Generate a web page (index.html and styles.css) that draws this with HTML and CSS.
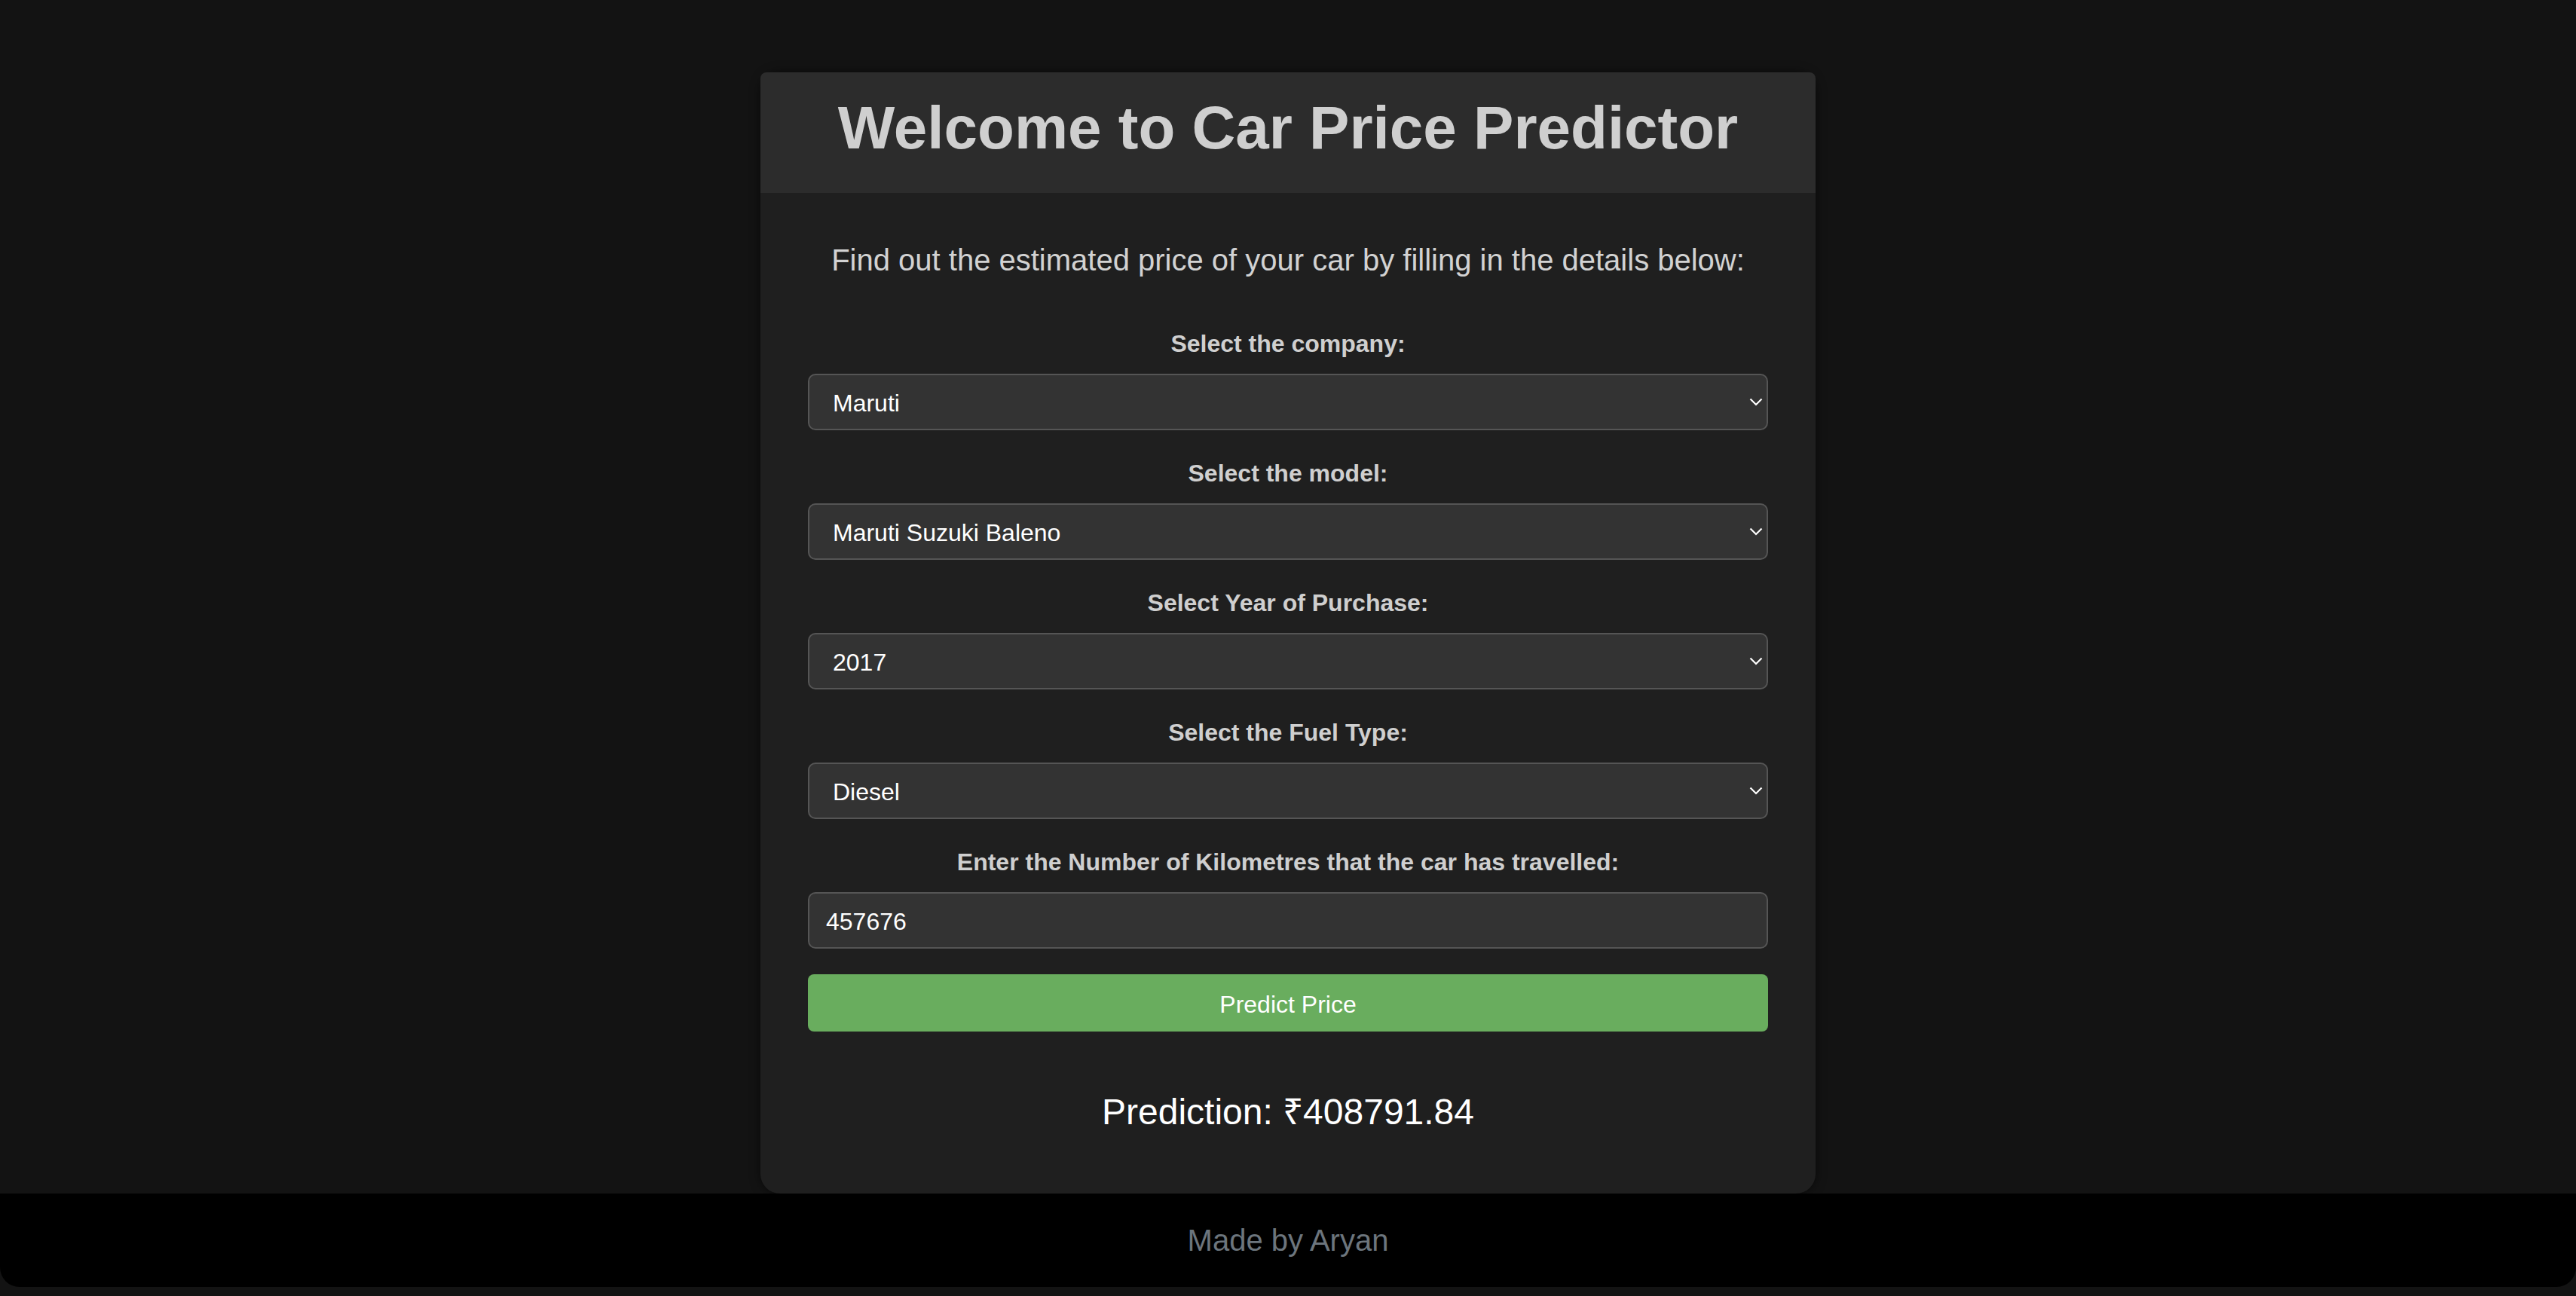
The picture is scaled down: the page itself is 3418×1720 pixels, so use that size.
FILE: index.html
```html
<!DOCTYPE html>
<html lang="en">
<head>
<meta charset="utf-8">
<title>Car Price Predictor</title>
<link rel="stylesheet" href="styles.css">
</head>
<body>
<div class="page">
  <main class="card">
    <header class="card-header">
      <h1>Welcome to Car Price Predictor</h1>
    </header>
    <div class="card-body">
      <p class="intro">Find out the estimated price of your car by filling in the details below:</p>
      <form class="form">
        <div class="field">
          <label class="label">Select the company:</label>
          <div class="select-wrap">
            <select class="control select"><option>Maruti</option></select>
            <svg class="chev" width="18" height="11" viewBox="0 0 18 11"><path d="M1.5 1.5 L9 9 L16.5 1.5" fill="none" stroke="#fff" stroke-width="2.2"/></svg>
          </div>
        </div>
        <div class="field">
          <label class="label">Select the model:</label>
          <div class="select-wrap">
            <select class="control select"><option>Maruti Suzuki Baleno</option></select>
            <svg class="chev" width="18" height="11" viewBox="0 0 18 11"><path d="M1.5 1.5 L9 9 L16.5 1.5" fill="none" stroke="#fff" stroke-width="2.2"/></svg>
          </div>
        </div>
        <div class="field">
          <label class="label">Select Year of Purchase:</label>
          <div class="select-wrap">
            <select class="control select"><option>2017</option></select>
            <svg class="chev" width="18" height="11" viewBox="0 0 18 11"><path d="M1.5 1.5 L9 9 L16.5 1.5" fill="none" stroke="#fff" stroke-width="2.2"/></svg>
          </div>
        </div>
        <div class="field">
          <label class="label">Select the Fuel Type:</label>
          <div class="select-wrap">
            <select class="control select"><option>Diesel</option></select>
            <svg class="chev" width="18" height="11" viewBox="0 0 18 11"><path d="M1.5 1.5 L9 9 L16.5 1.5" fill="none" stroke="#fff" stroke-width="2.2"/></svg>
          </div>
        </div>
        <div class="field">
          <label class="label">Enter the Number of Kilometres that the car has travelled:</label>
          <input class="control input" type="text" value="457676">
        </div>
        <button class="btn" type="button">Predict Price</button>
      </form>
      <div class="prediction">Prediction: ₹408791.84</div>
    </div>
  </main>
  <footer class="footer">Made by Aryan</footer>
</div>
</body>
</html>
```

FILE: styles.css
```css
* { box-sizing: border-box; }

html, body {
  margin: 0;
  padding: 0;
  background: #131313;
  font-family: "Liberation Sans", Arial, Helvetica, sans-serif;
}

.page {
  display: flex;
  flex-direction: column;
  align-items: center;
  padding-top: 96px;
  padding-bottom: 11px;
}

.card {
  width: 1400px;
  background: #1f1f1f;
  border-radius: 26px;
  box-shadow: 0 0 14px rgba(0, 0, 0, 0.55);
}

.card-header {
  background: #2c2c2c;
  border-radius: 8px 8px 0 0;
  height: 160px;
  padding-top: 28px;
  text-align: center;
}

.card-header h1 {
  margin: 0;
  font-size: 80px;
  line-height: 92px;
  font-weight: bold;
  color: #cfcfcf;
}

.card-body {
  padding: 66px 63px 81px 63px;
}

.intro {
  margin: 0 0 70px 0;
  font-size: 40px;
  line-height: 46px;
  color: #d2d2d2;
  text-align: center;
}

.form {
  display: flex;
  flex-direction: column;
}

.field {
  display: flex;
  flex-direction: column;
  margin-bottom: 39px;
}

.field:last-of-type {
  margin-bottom: 34px;
}

.label {
  display: block;
  font-size: 32px;
  line-height: 37px;
  font-weight: bold;
  color: #cfcfcf;
  text-align: center;
  margin-bottom: 21px;
}

.select-wrap {
  position: relative;
}

.control {
  display: block;
  width: 100%;
  height: 75px;
  background: #333333;
  border: 2px solid #555555;
  border-radius: 10px;
  color: #ffffff;
  font-family: "Liberation Sans", Arial, Helvetica, sans-serif;
  font-size: 32px;
  margin: 0;
  outline: none;
}

.select {
  appearance: none;
  -webkit-appearance: none;
  padding: 3px 60px 0 31px;
}

.input {
  padding: 3px 20px 0 22px;
}

.chev {
  position: absolute;
  right: 7px;
  top: 32px;
  pointer-events: none;
}

.btn {
  display: block;
  width: 100%;
  height: 76px;
  border: none;
  border-radius: 8px;
  background: #69ad5e;
  color: #ffffff;
  font-family: "Liberation Sans", Arial, Helvetica, sans-serif;
  font-size: 32px;
  padding: 5px 0 0 0;
  margin: 0;
  cursor: pointer;
}

.prediction {
  margin-top: 79px;
  font-size: 48px;
  line-height: 55px;
  color: #ffffff;
  text-align: center;
}

.footer {
  align-self: stretch;
  background: #000000;
  height: 124px;
  border-radius: 0 0 26px 26px;
  padding-top: 39px;
  font-size: 40px;
  line-height: 46px;
  color: #6c757d;
  text-align: center;
}
```
